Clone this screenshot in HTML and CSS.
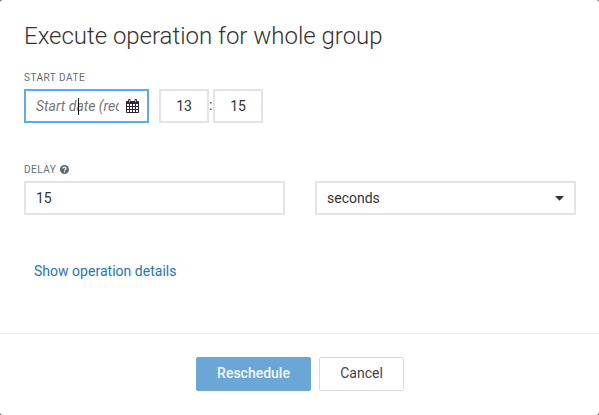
FILE: index.html
```html
<!DOCTYPE html>
<html lang="en">
<head>
<meta charset="utf-8">
<title>Execute operation</title>
<link rel="stylesheet" href="styles.css">
</head>
<body>
<div class="modal">
  <main class="content">
    <h1 class="title">Execute operation for whole group</h1>
    <div class="label">START DATE</div>
    <div class="row">
      <div class="field date"><span class="placeholder">Start date (required)</span><i class="caret"></i>
        <svg class="calendar" width="14" height="14" viewBox="0 0 14 14"><path fill="#302238" fill-rule="evenodd" d="M1 2h1V1q0-1 1.250-1T4.500 1v1h4V1q0-1 1.250-1T11 1v1h1q1 0 1 1v10q0 1-1 1H1q-1 0-1-1V3q0-1 1-1zM1 5v2h2V5zM4 5v2h2V5zM7 5v2h2V5zM10 5v2h2V5zM1 8v2h2V8zM4 8v2h2V8zM7 8v2h2V8zM10 8v2h2V8zM1 11v2h2v-2zM4 11v2h2v-2zM7 11v2h2v-2zM10 11v2h2v-2zM2.900 1v2.200h.7V1zM9.400 1v2.200h.7V1z"/></svg>
      </div>
      <div class="field time">13</div>
      <span class="colon">:</span>
      <div class="field time">15</div>
    </div>
    <div class="label delay-label">DELAY
      <svg class="help" width="9" height="9" viewBox="0 0 9 9"><circle cx="4.500" cy="4.500" r="4.500" fill="#5a6a72"/><path d="M2.900 3.500Q3 2.200 4.500 2.200T6 3.500Q6 4.200 5.200 4.500T4.500 5.500M4.500 6.200v1.200" fill="none" stroke="#fff" stroke-width="1.200"/></svg>
    </div>
    <div class="row delay-row">
      <div class="field">15</div>
      <div class="field select">seconds<svg width="9" height="5" viewBox="0 0 9 5"><path d="M0 0h9L4.500 4.700z" fill="#333"/></svg></div>
    </div>
    <a class="details">Show operation details</a>
  </main>
  <footer class="footer">
    <button class="button primary">Reschedule</button>
    <button class="button">Cancel</button>
  </footer>
</div>
</body>
</html>
```
FILE: styles.css
```css
* { box-sizing: border-box; }
body { margin: 0; background: #666; font: 14px/20px Roboto, sans-serif; color: #333; overflow: hidden; }
.modal { height: 415px; background: #fff; border-radius: 3px; display: flex; flex-direction: column; }
.content { height: 333px; padding: 20px 23px 0 24px; }
.title { margin: 0; font-size: 24px; line-height: 32px; font-weight: 300; letter-spacing: -.02px; white-space: nowrap; }
.label { margin-top: 18px; height: 19px; font-size: 10px; line-height: 15px; letter-spacing: .5px; color: #5f6f76; display: flex; }
.row { display: flex; }
.field { height: 34px; border: 2px solid #e4e4e4; padding: 0 10px; line-height: 31px; }
.date { position: relative; width: 125px; border-color: #5badea; display: flex; align-items: center; margin-right: 10px; }
.placeholder { width: 83px; overflow: hidden; white-space: nowrap; font-style: italic; line-height: 30px; color: #777; flex: none; }
.caret { position: absolute; left: 52px; top: 7px; width: 1px; height: 17px; background: #111; }
.calendar { margin-left: 7px; flex: none; }
.time { width: 50px; padding: 0; text-align: center; }
.colon { width: 4px; line-height: 32px; }
.delay-label { margin-top: 39px; }
.help { margin: 3px 0 0 4px; }
.delay-row { display: grid; grid-template-columns: 261px 261px; gap: 30px; }
.select { display: flex; justify-content: space-between; align-items: center; line-height: 30px; }
.details { display: block; margin: 46px 0 0 10px; letter-spacing: .02px; color: #2a73b8; }
.footer { height: 82px; border-top: 1px solid #eee; padding: 23px 0 0 1px; display: flex; justify-content: center; gap: 8px; }
.button { width: 85px; height: 34px; border: 1px solid #d9d9d9; border-radius: 2px; background: #fff; color: #444; font: 14px/20px Roboto, sans-serif; padding: 0 0 2px; }
.primary { width: 115px; border-color: #6aa6d6; background: #6aa6d6; color: #f3f8fc; font-weight: 500; }
```
